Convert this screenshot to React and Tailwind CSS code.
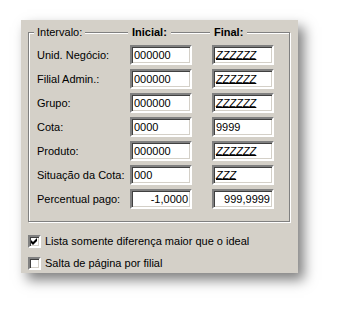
import React from "react";

const rows = [
  { label: "Unid. Negócio:", a: "000000", b: "ZZZZZZ" },
  { label: "Filial Admin.:", a: "000000", b: "ZZZZZZ" },
  { label: "Grupo:", a: "000000", b: "ZZZZZZ" },
  { label: "Cota:", a: "0000", b: "9999" },
  { label: "Produto:", a: "000000", b: "ZZZZZZ" },
  { label: "Situação da Cota:", a: "000", b: "ZZZ" },
  { label: "Percentual pago:", a: "-1,0000", b: "999,9999", right: true },
];

function Field({ value, right }) {
  const isZ = /^Z+$/.test(value);
  return (
    <div
      className={
        "w-[62px] h-[20px] bg-white border-2 border-t-[#808080] border-l-[#808080] border-b-white border-r-white shadow-[inset_1px_1px_0_#404040,inset_-1px_-1px_0_#d4d0c8] flex items-center px-[2px] " +
        (right ? "justify-end" : "justify-start")
      }
    >
      <span className={isZ ? "italic underline decoration-1 underline-offset-0" : ""}>{value}</span>
    </div>
  );
}

function Check({ checked }) {
  return (
    <div className="w-[13px] h-[13px] bg-white border-2 border-t-[#808080] border-l-[#808080] border-b-white border-r-white shadow-[inset_1px_1px_0_#404040,inset_-1px_-1px_0_#d4d0c8] flex items-center justify-center">
      {checked && (
        <svg width="9" height="9" viewBox="0 0 9 9">
          <path d="M1 3 L3 5 L7 1 L7 4 L3 8 L1 6 Z" fill="#000" />
        </svg>
      )}
    </div>
  );
}

export default function App() {
  return (
    <div className="w-[340px] h-[316px] bg-white pt-[20px] pl-[21px] font-['Liberation_Sans',Arial,sans-serif] text-[11px] leading-[13px] text-black">
      <div className="w-[277px] h-[253px] bg-[#d4d0c8] pl-[7px] pt-[12px] shadow-[6px_7px_12px_rgba(0,0,0,0.5)]">
        <div className="w-[262px] border border-[#808080] shadow-[inset_1px_1px_0_#fff,1px_1px_0_#fff] pb-[12px]">
          <div className="flex -mt-[7px] h-[13px] pl-[5px]">
            <div className="w-[94px]">
              <span className="bg-[#d4d0c8] px-[3px]">Intervalo:</span>
            </div>
            <div className="w-[82px]">
              <span className="bg-[#d4d0c8] px-[4px] font-bold">Inicial:</span>
            </div>
            <div>
              <span className="bg-[#d4d0c8] px-[4px] font-bold">Final:</span>
            </div>
          </div>
          <div className="mt-[6px] flex flex-col gap-[4px] pl-[8px]">
            {rows.map((r) => (
              <div key={r.label} className="flex items-center h-[20px]">
                <div className="w-[93px]">{r.label}</div>
                <Field value={r.a} right={r.right} />
                <div className="w-[20px]" />
                <Field value={r.b} right={r.right} />
              </div>
            ))}
          </div>
        </div>
        <div className="mt-[13px] flex items-center gap-[4px] h-[13px]">
          <Check checked />
          <span>Lista somente diferença maior que o ideal</span>
        </div>
        <div className="mt-[9px] flex items-center gap-[4px] h-[13px]">
          <Check />
          <span>Salta de página por filial</span>
        </div>
      </div>
    </div>
  );
}
